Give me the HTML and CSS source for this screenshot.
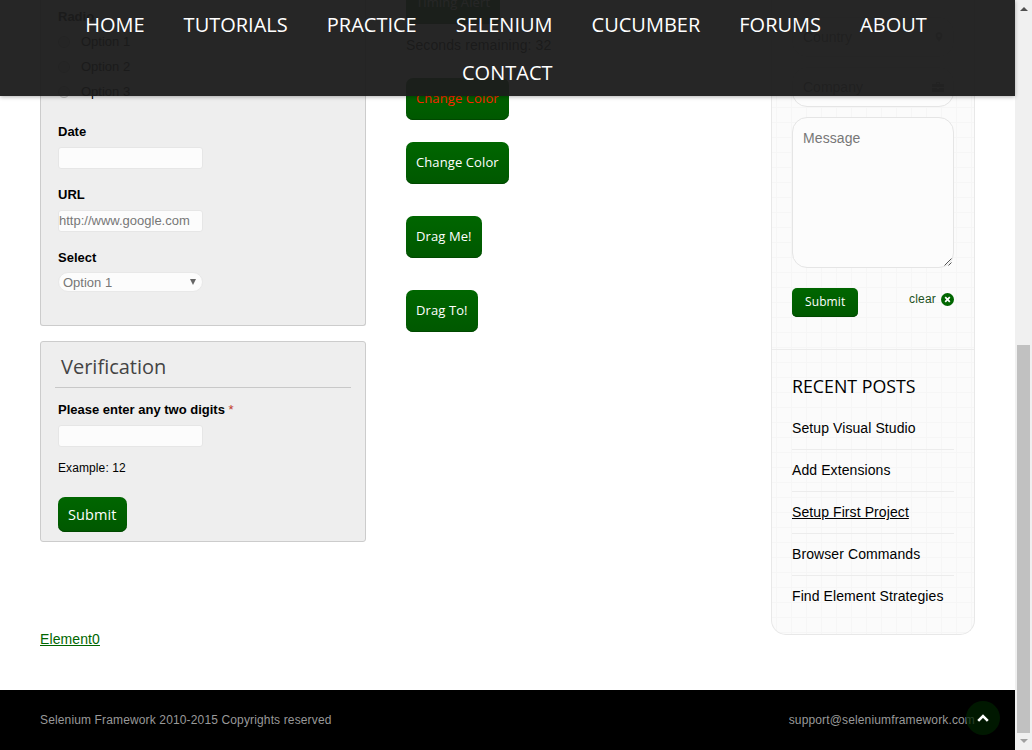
FILE: index.html
```html
<!DOCTYPE html>
<html lang="en">
<head>
<meta charset="utf-8">
<title>Selenium Framework</title>
<link rel="stylesheet" href="styles.css">
</head>
<body>
<div class="window">
  <div class="page">
    <nav class="nav">
      <a>HOME</a><a>TUTORIALS</a><a>PRACTICE</a><a>SELENIUM</a><a>CUCUMBER</a><a>FORUMS</a><a>ABOUT</a><a class="last">CONTACT</a>
    </nav>
    <main class="main">
      <div class="form-col">
        <section class="panel fields">
          <div class="label">Radio</div>
          <div class="option"><i class="radio"></i>Option 1</div>
          <div class="option"><i class="radio"></i>Option 2</div>
          <div class="option"><i class="radio"></i>Option 3</div>
          <div class="label date">Date</div>
          <div class="input"></div>
          <div class="label">URL</div>
          <div class="input">http://www.google.com</div>
          <div class="label">Select</div>
          <div class="select"><span>Option 1</span><svg width="6" height="6" viewBox="0 0 6 6"><path d="M0 0h6L3 6z" fill="#666"/></svg></div>
        </section>
        <section class="panel verify">
          <h2>Verification</h2>
          <div class="label">Please enter any two digits <b class="star">*</b></div>
          <div class="input"></div>
          <p class="example">Example: 12</p>
          <span class="btn btn-form">Submit</span>
        </section>
        <a class="element">Element0</a>
      </div>
      <div class="actions">
        <span class="btn timing">Timing Alert</span>
        <p class="seconds">Seconds remaining: 32</p>
        <span class="btn red">Change Color</span>
        <span class="btn change">Change Color</span>
        <span class="btn drag">Drag Me!</span>
        <span class="btn drag">Drag To!</span>
      </div>
      <aside class="sidebar">
        <div class="contact">
          <div class="pill"><span>Country</span><svg width="10" height="12" viewBox="0 0 10 12"><path fill="#aaa" fill-rule="evenodd" d="M5 1a3.5 3.5 0 0 1 3.5 3.5C8.500 7 5 11 5 11S1.500 7 1.500 4.500A3.500 3.500 0 0 1 5 1zm0 2a1.500 1.500 0 1 0 0 3 1.500 1.500 0 0 0 0-3z"/></svg></div>
          <div class="pill"><span>Company</span><svg width="12" height="10" viewBox="0 0 12 10"><path fill="#aaa" fill-rule="evenodd" d="M4 2V0h4v2h4v3H0V2zm1 0h2V1H5zM0 6h5v1h2V6h5v4H0z"/></svg></div>
          <div class="message"><span>Message</span><svg width="8" height="8" viewBox="0 0 8 8"><path d="M.5 7.500l7-7M4.500 7.500l3-3" stroke="#555" fill="none"/></svg></div>
          <div class="send">
            <span class="btn btn-small">Submit</span>
            <span class="clear">clear<svg width="13" height="13" viewBox="0 0 13 13"><circle cx="6.500" cy="6.500" r="6.500" fill="#060"/><path d="M4.200 4.200l4.600 4.600M8.800 4.200L4.200 8.800" stroke="#fff" stroke-width="1.700"/></svg></span>
          </div>
        </div>
        <div class="recent">
          <h3>RECENT POSTS</h3>
          <ul>
            <li>Setup Visual Studio</li>
            <li>Add Extensions</li>
            <li><u>Setup First Project</u></li>
            <li>Browser Commands</li>
            <li>Find Element Strategies</li>
          </ul>
        </div>
      </aside>
    </main>
    <footer class="footer">
      <span>Selenium Framework 2010-2015 Copyrights reserved</span>
      <span class="mail">support@seleniumframework.com</span>
      <span class="top"><svg width="12" height="8" viewBox="0 0 12 8"><path d="M1.200 6.800L6 2l4.800 4.800" fill="none" stroke="#fff" stroke-width="2.600"/></svg></span>
    </footer>
  </div>
  <div class="scrollbar">
    <svg class="arrow" width="8" height="4" viewBox="0 0 8 4"><path d="M4 0l4 4H0z" fill="#505050"/></svg>
    <div class="thumb"></div>
    <svg class="arrow" width="8" height="4" viewBox="0 0 8 4"><path d="M0 0h8L4 4z" fill="#a0a0a0"/></svg>
  </div>
</div>
</body>
</html>
```
FILE: styles.css
```css
* { box-sizing: border-box; }
body { margin: 0; background: #fff; font: 14px "Liberation Sans", Arial, sans-serif; color: #000; white-space: nowrap; }
p, h2, h3, ul { margin: 0; padding: 0; font-weight: 400; list-style: none; }
svg { display: block; flex: none; }
.window { display: flex; width: 1032px; height: 750px; overflow: hidden; }
.page { position: relative; width: 1015px; display: flex; flex-direction: column; }
.nav { position: absolute; z-index: 5; top: 0; left: 0; width: 1015px; height: 96px; padding: 1px 35px 0 32px; display: flex; flex-wrap: wrap; justify-content: center; background: rgba(28, 28, 28, .955); box-shadow: 0 1px 4px rgba(0, 0, 0, .3); font: 20px/48px "Open Sans", sans-serif; color: #fff; }
.nav a { height: 48px; margin: 0 19.5px; }
.nav .last { margin-right: 17px; }

.main { height: 690px; padding: 0 40px; display: flex; align-items: flex-start; }
.form-col { width: 326px; margin-right: 40px; }
.panel { background: #eee; border: 1px solid #ccc; border-radius: 3px; padding: 0 17px; }
.fields { height: 326px; border-top: 0; border-radius: 0 0 3px 3px; padding-top: 5px; }
.label { font-size: 13px; font-weight: 700; line-height: 24px; height: 24px; }
.option { display: flex; align-items: center; height: 25px; font-size: 13px; }
.radio { width: 12px; height: 12px; margin-right: 11px; border: 1px solid #bbb; border-radius: 50%; background: #e4e4e4; }
.date { margin-top: 16px; }
.input { width: 145px; height: 22px; margin: 3px 0 14px; border: 1px solid #e6e6e6; border-radius: 3px; background: #fcfcfc; font-size: 13px; line-height: 20px; color: #777; }
.select { width: 145px; height: 20px; margin-top: 2px; padding: 0 6px 0 4px; display: flex; align-items: center; justify-content: space-between; border: 1px solid #e8e8e8; border-radius: 10px; background: #fcfcfc; font-size: 13px; color: #777; }
.verify { height: 201px; margin-top: 15px; }
.verify h2 { height: 46px; margin: 0 -3px 10px; padding-left: 6px; border-bottom: 1px solid #c8c8c8; font: 20px/50px "Open Sans", sans-serif; color: #444; }
.star { color: #c0392b; font-weight: 400; }
.example { font-size: 12px; line-height: 16px; letter-spacing: .1px; }
.verify .input { margin-bottom: 13px; }
.element { display: inline-block; margin-top: 89px; line-height: 16px; letter-spacing: .1px; color: #060; text-decoration: underline; }

.btn { display: block; width: max-content; height: 42px; padding: 0 10px; border-radius: 7px; background: linear-gradient(#060, #005800); box-shadow: inset 0 -1px 0 #004800; color: #fff; font: 13px/41px "Open Sans", sans-serif; letter-spacing: .1px; }
.btn-form { width: 69px; height: 35px; margin-top: 21px; font-size: 14.5px; line-height: 35px; }
.actions { width: 365px; }
.timing { margin-top: -18px; }
.seconds { margin-top: 12px; line-height: 18px; letter-spacing: .1px; }
.red { margin-top: 24px; color: #f20; }
.change { margin-top: 22px; }
.drag { margin-top: 32px; }

.sidebar { width: 204px; height: 635px; border: 1px solid #e8e8e8; border-top: 0; border-radius: 0 0 15px 15px; background: linear-gradient(90deg, #f6f6f6 1px, transparent 1px) 4px 0 / 15px 15px, linear-gradient(#f6f6f6 1px, transparent 1px) 0 2px / 15px 15px #fbfbfb; }
.contact { height: 350px; padding: 17px 20px 0; border-bottom: 1px solid #ececec; }
.pill { height: 40px; margin-bottom: 10px; padding: 0 9px 0 10px; display: flex; align-items: center; justify-content: space-between; border: 1px solid #e5e5e5; border-radius: 15px; background: #fcfcfc; color: #777; }
.message { height: 151px; padding: 12px 1px 1px 10px; display: flex; justify-content: space-between; border: 1px solid #e5e5e5; border-radius: 15px; background: #fcfcfc; color: #777; letter-spacing: .1px; }
.message svg { align-self: flex-end; }
.send { margin-top: 20px; display: flex; justify-content: space-between; }
.btn-small { height: 29px; width: 66px; padding: 0 13px; border-radius: 5px; line-height: 28px; font-size: 12px; }
.clear { display: flex; align-items: center; height: 22px; gap: 5px; color: #205020; font-size: 12px; letter-spacing: .2px; }
.recent { padding: 23px 20px 0; }
.recent h3 { height: 34px; font: 17.8px/26px "Open Sans", sans-serif; }
.recent li { height: 42px; padding-top: 1px; border-bottom: 1px solid #ececec; line-height: 40px; letter-spacing: .09px; }
.recent li:first-child { height: 43px; }
.recent li + li { line-height: 39px; }
.recent li:last-child { border: 0; }

.footer { position: relative; height: 60px; padding: 0 40px; display: flex; align-items: center; justify-content: space-between; background: #000; color: #999; font-size: 12px; letter-spacing: .14px; }
.top { position: absolute; left: 966px; top: 11px; width: 34px; height: 34px; border-radius: 50%; display: flex; align-items: center; justify-content: center; background: rgba(0, 32, 0, .75); }
.scrollbar { width: 17px; height: 750px; padding: 7px 0; display: flex; flex-direction: column; align-items: center; background: #f0f0f0; }
.thumb { width: 13px; height: 388px; margin: 334px 0 6px; background: #c1c1c1; }
```
